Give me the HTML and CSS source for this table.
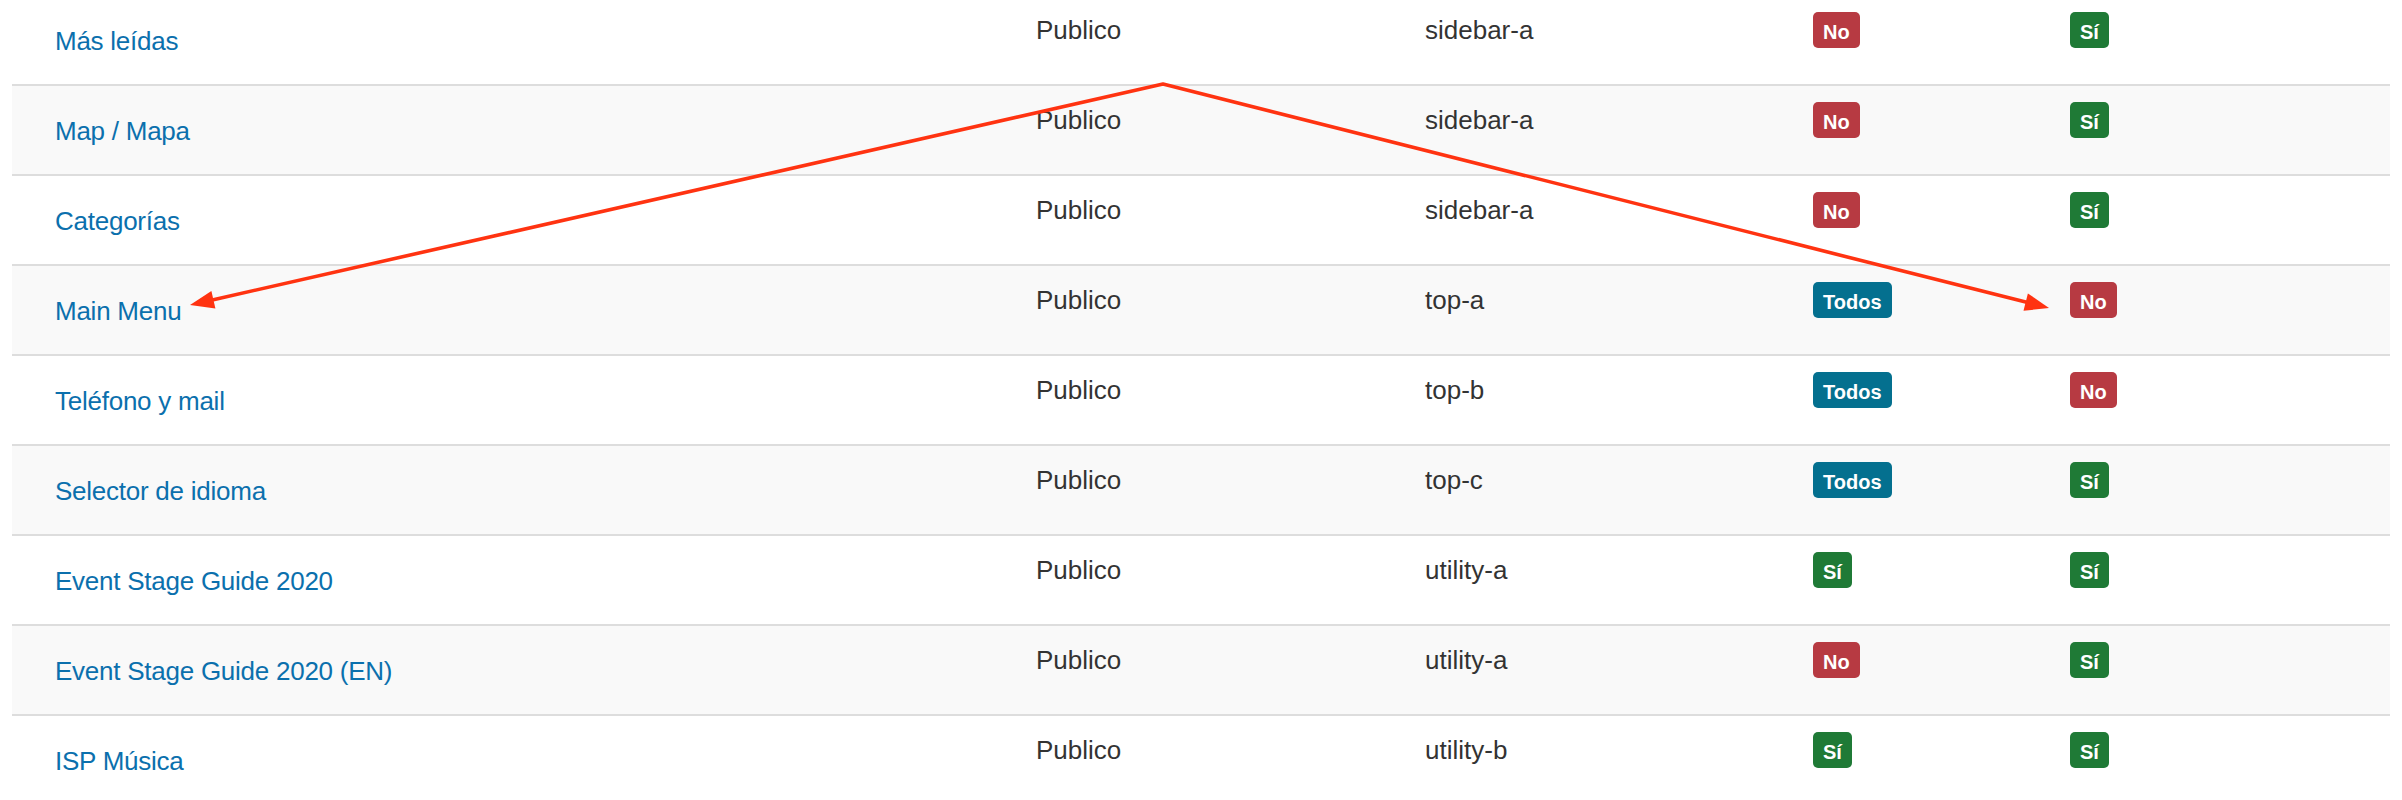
FILE: index.html
```html
<!DOCTYPE html>
<html lang="es">
<head>
<meta charset="utf-8">
<title>Módulos</title>
<link rel="stylesheet" href="styles.css">
</head>
<body>
<div class="page">
  <table class="modules">
    <colgroup>
      <col class="c-title"><col class="c-access"><col class="c-pos"><col class="c-a"><col class="c-b">
    </colgroup>
    <tbody>
      <tr><td class="title"><a href="#">Más leídas</a></td><td>Publico</td><td>sidebar-a</td><td><span class="badge no">No</span></td><td><span class="badge si">Sí</span></td></tr>
      <tr><td class="title"><a href="#">Map / Mapa</a></td><td>Publico</td><td>sidebar-a</td><td><span class="badge no">No</span></td><td><span class="badge si">Sí</span></td></tr>
      <tr><td class="title"><a href="#">Categorías</a></td><td>Publico</td><td>sidebar-a</td><td><span class="badge no">No</span></td><td><span class="badge si">Sí</span></td></tr>
      <tr><td class="title"><a href="#">Main Menu</a></td><td>Publico</td><td>top-a</td><td><span class="badge all">Todos</span></td><td><span class="badge no">No</span></td></tr>
      <tr><td class="title"><a href="#">Teléfono y mail</a></td><td>Publico</td><td>top-b</td><td><span class="badge all">Todos</span></td><td><span class="badge no">No</span></td></tr>
      <tr><td class="title"><a href="#">Selector de idioma</a></td><td>Publico</td><td>top-c</td><td><span class="badge all">Todos</span></td><td><span class="badge si">Sí</span></td></tr>
      <tr><td class="title"><a href="#">Event Stage Guide 2020</a></td><td>Publico</td><td>utility-a</td><td><span class="badge si">Sí</span></td><td><span class="badge si">Sí</span></td></tr>
      <tr><td class="title"><a href="#">Event Stage Guide 2020 (EN)</a></td><td>Publico</td><td>utility-a</td><td><span class="badge no">No</span></td><td><span class="badge si">Sí</span></td></tr>
      <tr><td class="title"><a href="#">ISP Música</a></td><td>Publico</td><td>utility-b</td><td><span class="badge si">Sí</span></td><td><span class="badge si">Sí</span></td></tr>
    </tbody>
  </table>
  <svg class="annot" width="2402" height="800" viewBox="0 0 2402 800" aria-hidden="true">
    <g stroke="#ff3311" stroke-width="3.6" fill="none" stroke-linecap="round" stroke-linejoin="round">
      <polyline points="213.4,299.7 1163,84 2025.7,302.1"/>
    </g>
    <g fill="#ff3311">
      <polygon points="190,305 211.4,290.9 215.4,308.5"/>
      <polygon points="2049,308 2023.5,310.8 2027.9,293.4"/>
    </g>
  </svg>
</div>
</body>
</html>
```

FILE: styles.css
```css
html, body {
  margin: 0;
  padding: 0;
  background: #ffffff;
  height: 800px;
  overflow: hidden;
}

.page {
  position: relative;
  display: flow-root;
  padding: 0 12px;
  font-family: "Liberation Sans", Arial, Helvetica, sans-serif;
  font-size: 26px;
  color: #333333;
}

.modules {
  width: 100%;
  margin-top: -6px;
  border-collapse: collapse;
  table-layout: fixed;
}

.c-title { width: 1008px; }
.c-access { width: 389px; }
.c-pos { width: 388px; }
.c-a { width: 257px; }

.modules tr {
  border-top: 2px solid #dddddd;
}

.modules tr:nth-child(even) {
  background: #f9f9f9;
}

.modules td {
  padding: 16px 16px 35px;
  line-height: 37px;
  vertical-align: top;
  white-space: nowrap;
}

.modules td.title {
  padding: 27px 16px 24px 43px;
}

.title a {
  color: #0b70ad;
  text-decoration: none;
  letter-spacing: -0.25px;
}

.badge {
  display: inline-block;
  padding: 10px 10px 6px;
  font-size: 20px;
  line-height: 20px;
  font-weight: bold;
  color: #ffffff;
  border-radius: 5px;
}

.badge.no { background: #b73a42; }
.badge.si { background: #1f7a36; }
.badge.all { background: #04708f; }

.annot {
  position: absolute;
  left: 0;
  top: 0;
  pointer-events: none;
}
```
